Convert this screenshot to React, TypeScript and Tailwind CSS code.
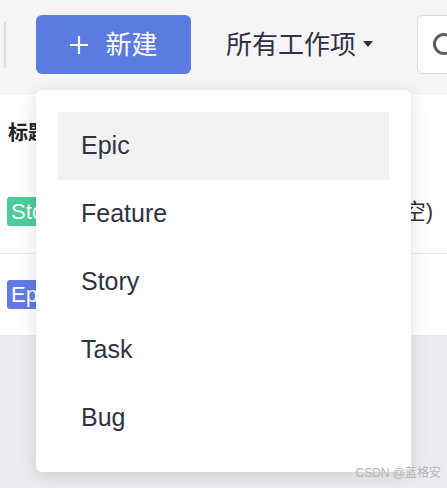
const items = ["Epic", "Feature", "Story", "Task", "Bug"];

const App = () => {
  return (
    <div className="relative w-[447px] h-[488px] overflow-hidden bg-[#ececf0] font-['Liberation_Sans','Noto_Sans_CJK_SC',sans-serif] text-[#2e3344]">
      {/* Toolbar */}
      <div className="h-[95px] bg-[#f5f5f7] flex items-start pt-[15px]">
        <div className="ml-[4px] mt-[7px] w-[2px] h-[46px] shrink-0 bg-[#dedee2]" />
        <button className="ml-[30px] w-[155px] h-[59px] shrink-0 rounded-[6px] bg-[#5c7be0] text-white flex items-center justify-center gap-[16px] text-[26px]">
          <svg width="20" height="20" viewBox="0 0 20 20" className="mt-[1px]">
            <path d="M10 1v18M1 10h18" stroke="white" strokeWidth="2.2" />
          </svg>
          <span className="leading-none">新建</span>
        </button>
        <div className="ml-[35px] h-[59px] shrink-0 whitespace-nowrap flex items-center gap-[7px] text-[26px] leading-none text-[#2d3142]">
          <span>所有工作项</span>
          <svg width="10" height="7" viewBox="0 0 10 7">
            <path d="M0 0h10L5 6z" fill="#2d3142" />
          </svg>
        </div>
        <div className="ml-[44px] w-[60px] h-[59px] shrink-0 rounded-[6px] border border-[#dcdce0] bg-white flex items-center pl-[14px]">
          <svg width="26" height="26" viewBox="0 0 26 26">
            <circle cx="12" cy="12" r="9.5" fill="none" stroke="#5a5d66" strokeWidth="3" />
          </svg>
        </div>
      </div>

      {/* Table */}
      <div className="bg-white">
        <div className="h-[75px] flex items-center pl-[8px] text-[20px] font-bold text-[#222]">标题</div>
        <div className="h-[84px] flex items-center justify-between pl-[7px] pr-[14px] border-b border-[#e8e8ec]">
          <span className="h-[29px] px-[4px] rounded-[3px] bg-[#4ccb9b] text-white text-[22px] leading-[29px]">Story</span>
          <span className="text-[22px] text-[#333]">(空)</span>
        </div>
        <div className="h-[81px] flex items-center pl-[7px]">
          <span className="h-[29px] px-[4px] rounded-[3px] bg-[#6479e6] text-white text-[22px] leading-[29px]">Epic</span>
        </div>
      </div>

      {/* Dropdown */}
      <div className="absolute left-[36px] top-[90px] w-[375px] h-[382px] rounded-[6px] bg-white shadow-[0_4px_18px_rgba(0,0,0,0.13)] p-[22px]">
        {items.map((item, i) => (
          <div
            key={item}
            className={
              i === 0
                ? "h-[68px] flex items-center pl-[23px] text-[25px] bg-[#f2f2f2]"
                : "h-[68px] flex items-center pl-[23px] text-[25px]"
            }
          >
            {item}
          </div>
        ))}
      </div>

      {/* Watermark */}
      <div className="absolute right-[6px] top-[464px] text-[12px] text-[#b4b4ba] whitespace-nowrap">CSDN @蓝格安</div>
    </div>
  );
};

export default App;
